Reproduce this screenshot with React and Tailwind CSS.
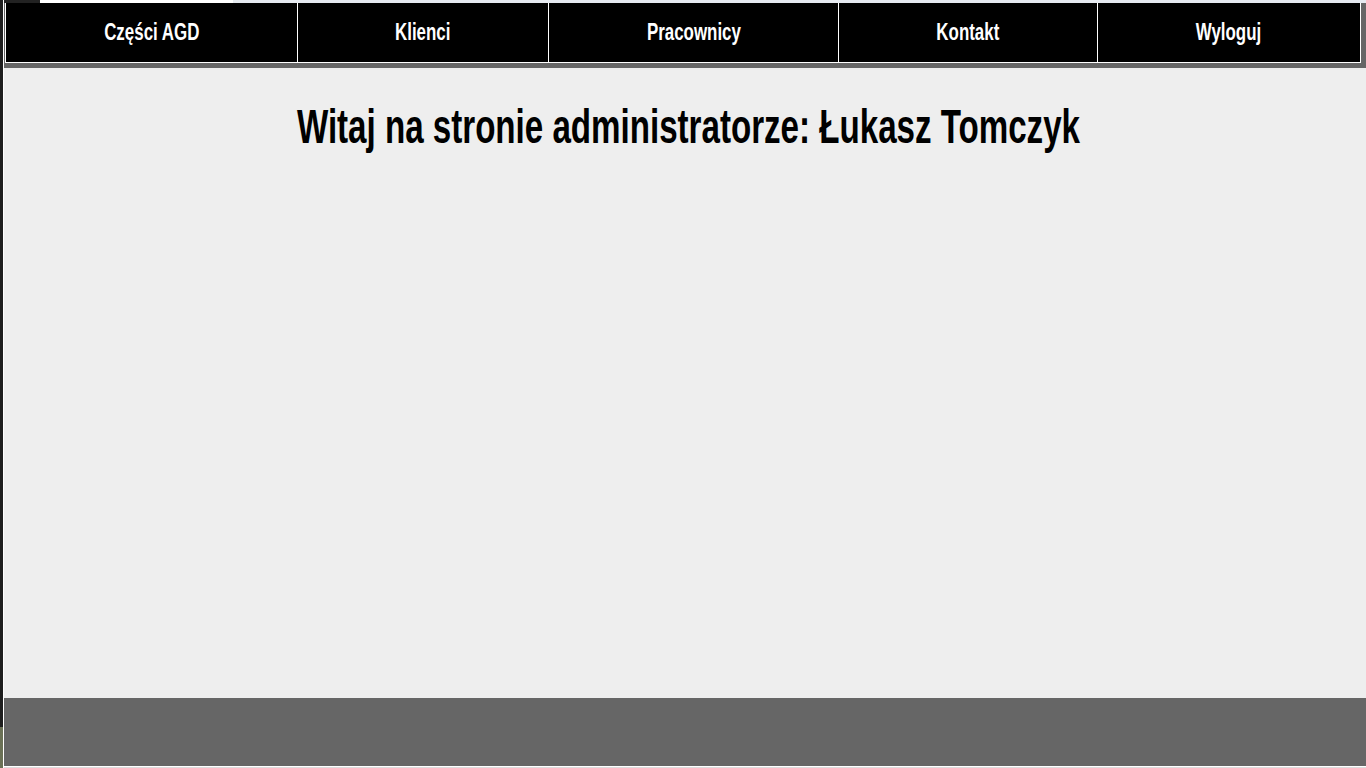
export default function App() {
  const cells = [
    ["Części AGD", "w-[292px] border-r border-white"],
    ["Klienci", "w-[251px] border-r border-white"],
    ["Pracownicy", "w-[290px] border-r border-white"],
    ["Kontakt", "w-[259px] border-r border-white"],
    ["Wyloguj", "flex-1"],
  ];
  return (
    <div className="flex h-[768px] w-[1366px] overflow-hidden font-['Liberation_Sans',Arial,sans-serif]">
      <div className="flex w-[3px] flex-col">
        <div className="h-[727px] bg-[#1e1e1e]" />
        <div className="flex-1 bg-[#6b7156]" />
      </div>
      <div className="w-px bg-white" />
      <div className="flex w-[1362px] flex-col bg-[#eeeeee]">
        <div className="flex h-[3px]">
          <div className="w-[36px] bg-[#222222]" />
          <div className="w-[193px] bg-white" />
          <div className="flex-1 bg-[#e6eaf0]" />
        </div>
        <div className="bg-[#666666] pb-[5px] pl-px pr-[5px]">
          <nav className="flex h-[60px] border-x border-b border-white bg-black">
            {cells.map(([label, cls]) => (
              <div key={label} className={`flex items-center justify-center ${cls}`}>
                <span className="inline-block scale-x-[0.735] text-[23px] font-bold text-white">
                  {label}
                </span>
              </div>
            ))}
          </nav>
        </div>
        <main className="flex h-[630px] flex-col items-center">
          <h1 className="ml-[6px] mt-[35px] inline-block scale-x-[0.69] whitespace-nowrap text-[48px] leading-[48px] font-bold text-black">
            Witaj na stronie administratorze: Łukasz Tomczyk
          </h1>
        </main>
        <footer className="h-[68px] bg-[#666666]" />
        <div className="h-px bg-white" />
        <div className="h-px bg-[#dddddd]" />
      </div>
    </div>
  );
}
